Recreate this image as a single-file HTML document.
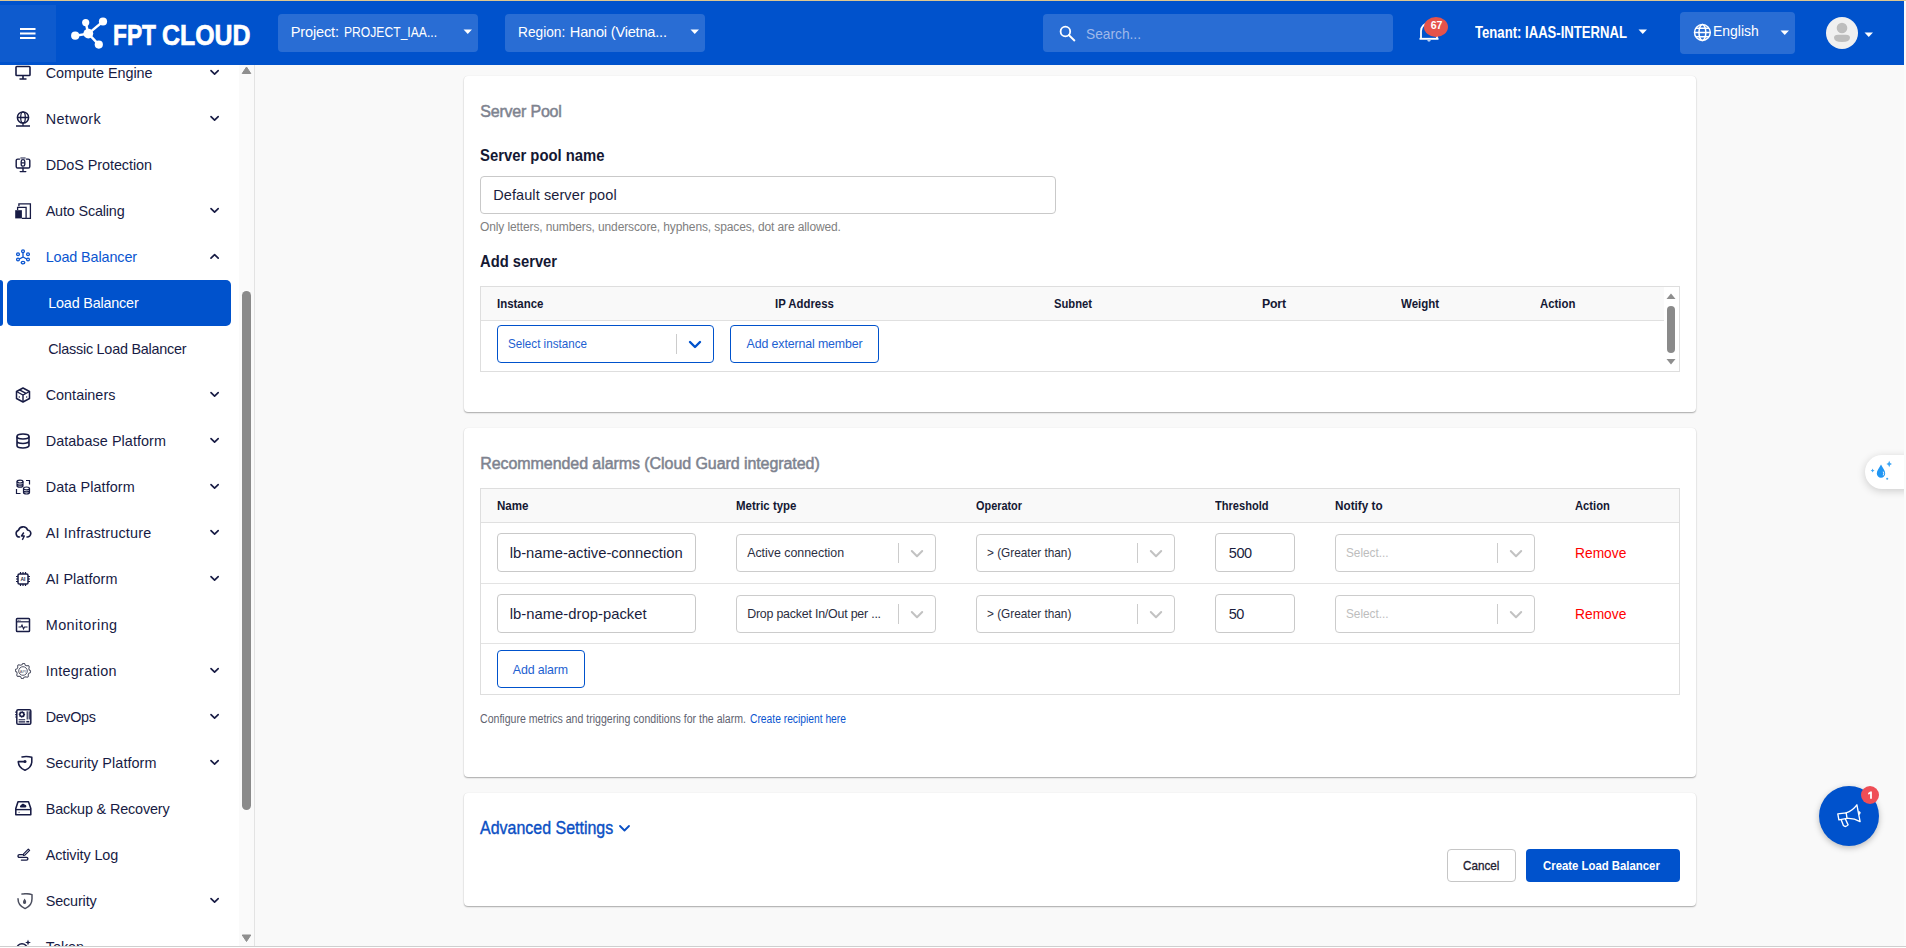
<!DOCTYPE html>
<html><head><meta charset="utf-8"><title>FPT Cloud - Create Load Balancer</title>
<style>
html,body{margin:0;padding:0;width:1906px;height:948px;overflow:hidden;background:#f9f9f9}
body{position:relative;font-family:"Liberation Sans",sans-serif}
.a{position:absolute;display:block}
.t{position:absolute;white-space:nowrap;line-height:1;font-family:"Liberation Sans",sans-serif}
</style></head><body>
<div class="a" style="left:0px;top:0px;width:1906px;height:948px;background:#f9f9f9"></div>
<div class="a" style="left:464px;top:76px;width:1232px;height:336px;background:#fff;border-radius:4px;box-shadow:0 1px 1.5px rgba(0,0,0,.32),0 0 1px rgba(0,0,0,.10)"></div>
<div class="a" style="left:464px;top:428px;width:1232px;height:349px;background:#fff;border-radius:4px;box-shadow:0 1px 1.5px rgba(0,0,0,.32),0 0 1px rgba(0,0,0,.10)"></div>
<div class="a" style="left:464px;top:793px;width:1232px;height:113px;background:#fff;border-radius:4px;box-shadow:0 1px 1.5px rgba(0,0,0,.32),0 0 1px rgba(0,0,0,.10)"></div>
<div class="t " style="left:480.25px;top:103.90px;font-size:16px;color:#7e838f;letter-spacing:-0.202px;-webkit-text-stroke:0.5px #7e838f;">Server Pool</div>
<div class="t " style="left:480.00px;top:148.00px;font-size:16px;color:#141833;font-weight:700;transform:scaleX(0.9274);transform-origin:0 0;">Server pool name</div>
<div class="a" style="left:480px;top:176px;width:576px;height:38px;border:1px solid #c9c9c9;border-radius:4px;box-sizing:border-box;background:#fff"></div>
<div class="t " style="left:493.20px;top:187.75px;font-size:14.5px;color:#1a1d3d;letter-spacing:0.097px;">Default server pool</div>
<div class="t " style="left:480.00px;top:220.70px;font-size:12px;color:#808080;letter-spacing:-0.118px;">Only letters, numbers, underscore, hyphens, spaces, dot are allowed.</div>
<div class="t " style="left:480.00px;top:253.50px;font-size:16px;color:#141833;font-weight:700;transform:scaleX(0.9219);transform-origin:0 0;">Add server</div>
<div class="a" style="left:480px;top:286px;width:1200px;height:86px;border:1px solid #dedede;box-sizing:border-box;background:#fff"></div>
<div class="a" style="left:481px;top:287px;width:1183px;height:33px;background:#f9f9f9"></div>
<div class="a" style="left:481px;top:320px;width:1183px;height:1px;background:#e0e0e0"></div>
<div class="t " style="left:496.60px;top:297.85px;font-size:12.3px;color:#141833;font-weight:700;transform:scaleX(0.9312);transform-origin:0 0;">Instance</div>
<div class="t " style="left:775.30px;top:297.85px;font-size:12.3px;color:#141833;font-weight:700;transform:scaleX(0.9247);transform-origin:0 0;">IP Address</div>
<div class="t " style="left:1053.60px;top:297.85px;font-size:12.3px;color:#141833;font-weight:700;transform:scaleX(0.9137);transform-origin:0 0;">Subnet</div>
<div class="t " style="left:1262.00px;top:297.85px;font-size:12.3px;color:#141833;font-weight:700;letter-spacing:-0.200px;">Port</div>
<div class="t " style="left:1401.10px;top:297.85px;font-size:12.3px;color:#141833;font-weight:700;transform:scaleX(0.9358);transform-origin:0 0;">Weight</div>
<div class="t " style="left:1540.30px;top:297.85px;font-size:12.3px;color:#141833;font-weight:700;transform:scaleX(0.9254);transform-origin:0 0;">Action</div>
<div class="a" style="left:497px;top:325px;width:217px;height:38px;border:1px solid #0052cc;border-radius:4px;box-sizing:border-box;background:#fff"></div>
<div class="t " style="left:507.70px;top:338.10px;font-size:12.4px;color:#1d5fd1;transform:scaleX(0.9397);transform-origin:0 0;">Select instance</div>
<div class="a" style="left:676px;top:334px;width:1px;height:20px;background:#cccccc"></div>
<svg class="a" style="left:687px;top:339px;" width="16" height="11" viewBox="0 0 16 11"><path d="M3 3 L8 8 L13 3" fill="none" stroke="#0052cc" stroke-width="2.4" stroke-linecap="round" stroke-linejoin="round"/></svg>
<div class="a" style="left:730px;top:325px;width:149px;height:38px;border:1px solid #0052cc;border-radius:4px;box-sizing:border-box;background:#fff"></div>
<div class="t " style="left:746.60px;top:337.70px;font-size:12.4px;color:#1d5fd1;letter-spacing:-0.130px;">Add external member</div>
<svg class="a" style="left:1665px;top:289px;" width="12" height="80" viewBox="0 0 12 80"><path d="M1.5 10 L6 4.5 L10.5 10 Z" fill="#8e8e8e"/><rect x="2" y="17" width="8" height="47" rx="4" fill="#8a8a8a"/><path d="M1.5 70 L6 75.5 L10.5 70 Z" fill="#8e8e8e"/></svg>
<div class="t " style="left:480.25px;top:456.30px;font-size:16px;color:#7e838f;letter-spacing:-0.069px;-webkit-text-stroke:0.5px #7e838f;">Recommended alarms (Cloud Guard integrated)</div>
<div class="a" style="left:480px;top:488px;width:1200px;height:207px;border:1px solid #dedede;box-sizing:border-box;background:#fff"></div>
<div class="a" style="left:481px;top:489px;width:1198px;height:33px;background:#f9f9f9"></div>
<div class="a" style="left:481px;top:522px;width:1198px;height:1px;background:#e0e0e0"></div>
<div class="a" style="left:481px;top:583px;width:1198px;height:1px;background:#e3e3e3"></div>
<div class="a" style="left:481px;top:643px;width:1198px;height:1px;background:#e3e3e3"></div>
<div class="t " style="left:496.80px;top:500.05px;font-size:12.3px;color:#141833;font-weight:700;transform:scaleX(0.9415);transform-origin:0 0;">Name</div>
<div class="t " style="left:736.30px;top:500.05px;font-size:12.3px;color:#141833;font-weight:700;transform:scaleX(0.9316);transform-origin:0 0;">Metric type</div>
<div class="t " style="left:976.30px;top:500.05px;font-size:12.3px;color:#141833;font-weight:700;transform:scaleX(0.8862);transform-origin:0 0;">Operator</div>
<div class="t " style="left:1215.40px;top:500.05px;font-size:12.3px;color:#141833;font-weight:700;transform:scaleX(0.9005);transform-origin:0 0;">Threshold</div>
<div class="t " style="left:1335.00px;top:500.05px;font-size:12.3px;color:#141833;font-weight:700;transform:scaleX(0.9535);transform-origin:0 0;">Notify to</div>
<div class="t " style="left:1575.00px;top:500.05px;font-size:12.3px;color:#141833;font-weight:700;transform:scaleX(0.9097);transform-origin:0 0;">Action</div>
<div class="a" style="left:497px;top:533px;width:199px;height:39px;border:1px solid #c9c9c9;border-radius:4px;box-sizing:border-box;background:#fff"></div>
<div class="a" style="left:736px;top:534px;width:200px;height:38px;border:1px solid #cccccc;border-radius:4px;box-sizing:border-box;background:#fff"></div>
<div class="a" style="left:898px;top:543px;width:1px;height:20px;background:#cccccc"></div>
<svg class="a" style="left:910px;top:549px;" width="14" height="10" viewBox="0 0 14 10"><path d="M1.8 2 L7 7.2 L12.2 2" fill="none" stroke="#c2c2c2" stroke-width="2" stroke-linecap="round" stroke-linejoin="round"/></svg>
<div class="a" style="left:976px;top:534px;width:199px;height:38px;border:1px solid #cccccc;border-radius:4px;box-sizing:border-box;background:#fff"></div>
<div class="a" style="left:1137px;top:543px;width:1px;height:20px;background:#cccccc"></div>
<svg class="a" style="left:1149px;top:549px;" width="14" height="10" viewBox="0 0 14 10"><path d="M1.8 2 L7 7.2 L12.2 2" fill="none" stroke="#c2c2c2" stroke-width="2" stroke-linecap="round" stroke-linejoin="round"/></svg>
<div class="a" style="left:1215px;top:533px;width:80px;height:39px;border:1px solid #c9c9c9;border-radius:4px;box-sizing:border-box;background:#fff"></div>
<div class="a" style="left:1335px;top:534px;width:200px;height:38px;border:1px solid #cccccc;border-radius:4px;box-sizing:border-box;background:#fff"></div>
<div class="a" style="left:1497px;top:543px;width:1px;height:20px;background:#cccccc"></div>
<svg class="a" style="left:1509px;top:549px;" width="14" height="10" viewBox="0 0 14 10"><path d="M1.8 2 L7 7.2 L12.2 2" fill="none" stroke="#c2c2c2" stroke-width="2" stroke-linecap="round" stroke-linejoin="round"/></svg>
<div class="a" style="left:497px;top:594px;width:199px;height:39px;border:1px solid #c9c9c9;border-radius:4px;box-sizing:border-box;background:#fff"></div>
<div class="a" style="left:736px;top:595px;width:200px;height:38px;border:1px solid #cccccc;border-radius:4px;box-sizing:border-box;background:#fff"></div>
<div class="a" style="left:898px;top:604px;width:1px;height:20px;background:#cccccc"></div>
<svg class="a" style="left:910px;top:610px;" width="14" height="10" viewBox="0 0 14 10"><path d="M1.8 2 L7 7.2 L12.2 2" fill="none" stroke="#c2c2c2" stroke-width="2" stroke-linecap="round" stroke-linejoin="round"/></svg>
<div class="a" style="left:976px;top:595px;width:199px;height:38px;border:1px solid #cccccc;border-radius:4px;box-sizing:border-box;background:#fff"></div>
<div class="a" style="left:1137px;top:604px;width:1px;height:20px;background:#cccccc"></div>
<svg class="a" style="left:1149px;top:610px;" width="14" height="10" viewBox="0 0 14 10"><path d="M1.8 2 L7 7.2 L12.2 2" fill="none" stroke="#c2c2c2" stroke-width="2" stroke-linecap="round" stroke-linejoin="round"/></svg>
<div class="a" style="left:1215px;top:594px;width:80px;height:39px;border:1px solid #c9c9c9;border-radius:4px;box-sizing:border-box;background:#fff"></div>
<div class="a" style="left:1335px;top:595px;width:200px;height:38px;border:1px solid #cccccc;border-radius:4px;box-sizing:border-box;background:#fff"></div>
<div class="a" style="left:1497px;top:604px;width:1px;height:20px;background:#cccccc"></div>
<svg class="a" style="left:1509px;top:610px;" width="14" height="10" viewBox="0 0 14 10"><path d="M1.8 2 L7 7.2 L12.2 2" fill="none" stroke="#c2c2c2" stroke-width="2" stroke-linecap="round" stroke-linejoin="round"/></svg>
<div class="t " style="left:509.70px;top:545.60px;font-size:14.8px;color:#1a1d3d;letter-spacing:-0.025px;">lb-name-active-connection</div>
<div class="t " style="left:509.70px;top:606.60px;font-size:14.8px;color:#1a1d3d;letter-spacing:0.022px;">lb-name-drop-packet</div>
<div class="t " style="left:747.20px;top:546.90px;font-size:12.4px;color:#2b2e3f;letter-spacing:-0.014px;">Active connection</div>
<div class="t " style="left:747.20px;top:607.60px;font-size:12.4px;color:#2b2e3f;letter-spacing:-0.210px;">Drop packet In/Out per ...</div>
<div class="t " style="left:987.10px;top:546.60px;font-size:12.4px;color:#2b2e3f;transform:scaleX(0.9533);transform-origin:0 0;">&gt; (Greater than)</div>
<div class="t " style="left:987.10px;top:607.60px;font-size:12.4px;color:#2b2e3f;transform:scaleX(0.9533);transform-origin:0 0;">&gt; (Greater than)</div>
<div class="t " style="left:1228.70px;top:546.05px;font-size:14.5px;color:#1a1d3d;letter-spacing:-0.357px;">500</div>
<div class="t " style="left:1228.70px;top:606.75px;font-size:14.5px;color:#1a1d3d;letter-spacing:-0.595px;">50</div>
<div class="t " style="left:1346.40px;top:546.90px;font-size:12.4px;color:#bdbdbd;transform:scaleX(0.9517);transform-origin:0 0;">Select...</div>
<div class="t " style="left:1346.40px;top:607.80px;font-size:12.4px;color:#bdbdbd;transform:scaleX(0.9517);transform-origin:0 0;">Select...</div>
<div class="t " style="left:1575.40px;top:545.75px;font-size:14.5px;color:#ff0000;transform:scaleX(0.9511);transform-origin:0 0;">Remove</div>
<div class="t " style="left:1575.40px;top:606.75px;font-size:14.5px;color:#ff0000;transform:scaleX(0.9511);transform-origin:0 0;">Remove</div>
<div class="a" style="left:497px;top:650px;width:88px;height:38px;border:1px solid #0052cc;border-radius:4px;box-sizing:border-box;background:#fff"></div>
<div class="t " style="left:512.80px;top:664.10px;font-size:12.4px;color:#1d5fd1;letter-spacing:-0.143px;">Add alarm</div>
<div class="t " style="left:479.90px;top:713.20px;font-size:12px;color:#5f6370;transform:scaleX(0.8803);transform-origin:0 0;">Configure metrics and triggering conditions for the alarm.</div>
<div class="t " style="left:749.70px;top:713.20px;font-size:12px;color:#0a55cf;transform:scaleX(0.8565);transform-origin:0 0;">Create recipient here</div>
<div class="t " style="left:479.90px;top:819.25px;font-size:18.5px;color:#0a4fc4;transform:scaleX(0.8637);transform-origin:0 0;-webkit-text-stroke:0.4px #0a4fc4;">Advanced Settings</div>
<svg class="a" style="left:618px;top:823px;" width="13" height="11" viewBox="0 0 13 11"><path d="M2 3 L6.5 7.5 L11 3" fill="none" stroke="#0a4fc4" stroke-width="1.8" stroke-linecap="round" stroke-linejoin="round"/></svg>
<div class="a" style="left:1447px;top:849px;width:69px;height:33px;border:1px solid #c6c6c6;border-radius:4px;box-sizing:border-box;background:#fff"></div>
<div class="t " style="left:1463.05px;top:859.20px;font-size:13px;color:#1e2030;transform:scaleX(0.8986);transform-origin:0 0;-webkit-text-stroke:0.3px #1e2030;">Cancel</div>
<div class="a" style="left:1526px;top:849px;width:154px;height:33px;background:#0052cc;border-radius:4px"></div>
<div class="t " style="left:1542.60px;top:859.95px;font-size:12.5px;color:#ffffff;font-weight:700;transform:scaleX(0.9089);transform-origin:0 0;">Create Load Balancer</div>
<div class="a" style="left:0px;top:65px;width:239px;height:881px;background:#fff"></div>
<div class="a" style="left:239px;top:65px;width:15px;height:881px;background:#fafafa"></div>
<div class="a" style="left:254px;top:65px;width:1px;height:881px;background:#e3e3e3"></div>
<svg class="a" style="left:239px;top:64px;" width="15" height="12" viewBox="0 0 15 12"><path d="M3.2 9.5 L7.5 3 L11.8 9.5 Z" fill="#8f8f8f" stroke="#8f8f8f" stroke-width="1" stroke-linejoin="round"/></svg>
<div class="a" style="left:242px;top:291px;width:9px;height:519px;background:#8a8a8a;border-radius:5px"></div>
<svg class="a" style="left:239px;top:932px;" width="15" height="12" viewBox="0 0 15 12"><path d="M3.2 3 L7.5 9.5 L11.8 3 Z" fill="#8f8f8f" stroke="#8f8f8f" stroke-width="1" stroke-linejoin="round"/></svg>
<svg class="a" style="left:15px;top:65px;" width="18" height="17" viewBox="0 0 18 17"><rect x="1" y="1.5" width="14" height="9" rx="0.8" fill="none" stroke="#171b44" stroke-width="1.6"/><path d="M8 10.5 V13.5 M4.5 14 H11.5" stroke="#171b44" stroke-width="1.6" fill="none"/></svg>
<div class="t " style="left:45.70px;top:65.80px;font-size:14.4px;color:#171b44;letter-spacing:-0.022px;">Compute Engine</div>
<svg class="a" style="left:209px;top:69px;" width="11" height="8" viewBox="0 0 11 8"><path d="M2 1.6 L5.6 5.2 L9.2 1.6" fill="none" stroke="#171b44" stroke-width="1.65" stroke-linecap="round" stroke-linejoin="round"/></svg>
<svg class="a" style="left:15px;top:111px;" width="18" height="17" viewBox="0 0 18 17"><circle cx="8" cy="6.5" r="5.6" fill="none" stroke="#171b44" stroke-width="1.5"/><ellipse cx="8" cy="6.5" rx="2.3" ry="5.6" fill="none" stroke="#171b44" stroke-width="1.3"/><path d="M2.4 6.5 H13.6 M8 12 V14.5 M1 15 H15" stroke="#171b44" stroke-width="1.3" fill="none"/></svg>
<div class="t " style="left:45.70px;top:111.80px;font-size:14.4px;color:#171b44;letter-spacing:0.368px;">Network</div>
<svg class="a" style="left:209px;top:115px;" width="11" height="8" viewBox="0 0 11 8"><path d="M2 1.6 L5.6 5.2 L9.2 1.6" fill="none" stroke="#171b44" stroke-width="1.65" stroke-linecap="round" stroke-linejoin="round"/></svg>
<svg class="a" style="left:15px;top:157px;" width="18" height="17" viewBox="0 0 18 17"><path d="M4.6 2.1 H2.7 Q1.2 2.1 1.2 3.6 V9.4 Q1.2 11 2.7 11 H13.3 Q14.8 11 14.8 9.4 V3.6 Q14.8 2.1 13.3 2.1 H11.4" fill="none" stroke="#171b44" stroke-width="1.45" stroke-linecap="round"/><path d="M8 11 V14.3 M5.2 14.6 H10.8" stroke="#171b44" stroke-width="1.4" stroke-linecap="round"/><rect x="6.2" y="2.6" width="3.6" height="6.6" rx="1.8" fill="none" stroke="#171b44" stroke-width="1.3"/><path d="M6.3 5.9 H9.7 M5.4 1 H10.6" stroke="#171b44" stroke-width="1.2"/></svg>
<div class="t " style="left:45.70px;top:157.80px;font-size:14.4px;color:#171b44;letter-spacing:-0.063px;">DDoS Protection</div>
<svg class="a" style="left:15px;top:203px;" width="18" height="17" viewBox="0 0 18 17"><path d="M3.9 3.2 V0.8 H15.4 V15.4 H11.2" fill="none" stroke="#171b44" stroke-width="1.3"/><path d="M2.6 7 V4.3 H11.1 V15.4 H6.9" fill="none" stroke="#171b44" stroke-width="1.3"/><rect x="0.2" y="7.2" width="6.7" height="8.2" fill="#171b44"/></svg>
<div class="t " style="left:45.70px;top:203.80px;font-size:14.4px;color:#171b44;letter-spacing:-0.162px;">Auto Scaling</div>
<svg class="a" style="left:209px;top:207px;" width="11" height="8" viewBox="0 0 11 8"><path d="M2 1.6 L5.6 5.2 L9.2 1.6" fill="none" stroke="#171b44" stroke-width="1.65" stroke-linecap="round" stroke-linejoin="round"/></svg>
<svg class="a" style="left:15px;top:249px;" width="18" height="17" viewBox="0 0 18 17"><circle cx="8" cy="2.2" r="1.4" fill="none" stroke="#0a55d0" stroke-width="1.3"/><circle cx="3" cy="5.2" r="1.4" fill="none" stroke="#0a55d0" stroke-width="1.3"/><circle cx="13" cy="5.2" r="1.4" fill="none" stroke="#0a55d0" stroke-width="1.3"/><circle cx="3" cy="10.5" r="1.4" fill="none" stroke="#0a55d0" stroke-width="1.3"/><circle cx="13" cy="10.5" r="1.4" fill="none" stroke="#0a55d0" stroke-width="1.3"/><ellipse cx="8" cy="13.6" rx="1.8" ry="1.3" fill="none" stroke="#0a55d0" stroke-width="1.3"/><path d="M8 3.6 V8 L4.3 10 M8 8 L11.7 10" fill="none" stroke="#0a55d0" stroke-width="1.3"/></svg>
<div class="t " style="left:45.70px;top:249.80px;font-size:14.4px;color:#0a55d0;letter-spacing:-0.115px;">Load Balancer</div>
<svg class="a" style="left:209px;top:252px;" width="11" height="8" viewBox="0 0 11 8"><path d="M2 6.2 L5.6 2.6 L9.2 6.2" fill="none" stroke="#171b44" stroke-width="1.65" stroke-linecap="round" stroke-linejoin="round"/></svg>
<div class="a" style="left:0px;top:280px;width:3px;height:46px;background:#0052cc;border-radius:0 4px 4px 0"></div>
<div class="a" style="left:7px;top:280px;width:224px;height:46px;background:#0052cc;border-radius:5px"></div>
<div class="t " style="left:48.20px;top:295.80px;font-size:14.4px;color:#ffffff;letter-spacing:-0.190px;">Load Balancer</div>
<div class="t " style="left:48.20px;top:341.80px;font-size:14.4px;color:#171b44;letter-spacing:-0.244px;">Classic Load Balancer</div>
<svg class="a" style="left:15px;top:387px;" width="18" height="17" viewBox="0 0 18 17"><path d="M8 1 L14.5 4.5 V11.5 L8 15 L1.5 11.5 V4.5 Z" fill="none" stroke="#171b44" stroke-width="1.5" stroke-linejoin="round"/><path d="M1.5 4.5 L8 8 L14.5 4.5 M8 8 V15 M4.5 2.8 L11 6.3" fill="none" stroke="#171b44" stroke-width="1.4"/><circle cx="4.3" cy="10" r="0.7" fill="#171b44"/><circle cx="11.7" cy="10" r="0.7" fill="#171b44"/></svg>
<div class="t " style="left:45.70px;top:387.80px;font-size:14.4px;color:#171b44;letter-spacing:0.012px;">Containers</div>
<svg class="a" style="left:209px;top:391px;" width="11" height="8" viewBox="0 0 11 8"><path d="M2 1.6 L5.6 5.2 L9.2 1.6" fill="none" stroke="#171b44" stroke-width="1.65" stroke-linecap="round" stroke-linejoin="round"/></svg>
<svg class="a" style="left:15px;top:433px;" width="18" height="17" viewBox="0 0 18 17"><ellipse cx="8" cy="3.5" rx="6" ry="2.5" fill="none" stroke="#171b44" stroke-width="1.6"/><path d="M2 3.5 V12.5 A6 2.5 0 0 0 14 12.5 V3.5 M2 8 A6 2.5 0 0 0 14 8" fill="none" stroke="#171b44" stroke-width="1.6"/></svg>
<div class="t " style="left:45.70px;top:433.80px;font-size:14.4px;color:#171b44;letter-spacing:0.067px;">Database Platform</div>
<svg class="a" style="left:209px;top:437px;" width="11" height="8" viewBox="0 0 11 8"><path d="M2 1.6 L5.6 5.2 L9.2 1.6" fill="none" stroke="#171b44" stroke-width="1.65" stroke-linecap="round" stroke-linejoin="round"/></svg>
<svg class="a" style="left:15px;top:479px;" width="18" height="17" viewBox="0 0 18 17"><ellipse cx="5" cy="2.6" rx="3" ry="1.4" fill="none" stroke="#171b44" stroke-width="1.2"/><path d="M2 2.6 V6.8 A3 1.4 0 0 0 8 6.8 V2.6 M2 4.7 A3 1.4 0 0 0 8 4.7" fill="none" stroke="#171b44" stroke-width="1.2"/><ellipse cx="11.5" cy="9.4" rx="3" ry="1.4" fill="none" stroke="#171b44" stroke-width="1.2"/><path d="M8.5 9.4 V13.6 A3 1.4 0 0 0 14.5 13.6 V9.4 M8.5 11.5 A3 1.4 0 0 0 14.5 11.5" fill="none" stroke="#171b44" stroke-width="1.2"/><path d="M11 1.5 H14.5 V5.5 M1.5 10 V14.5 H5.5" fill="none" stroke="#171b44" stroke-width="1.2"/></svg>
<div class="t " style="left:45.70px;top:479.80px;font-size:14.4px;color:#171b44;letter-spacing:0.085px;">Data Platform</div>
<svg class="a" style="left:209px;top:483px;" width="11" height="8" viewBox="0 0 11 8"><path d="M2 1.6 L5.6 5.2 L9.2 1.6" fill="none" stroke="#171b44" stroke-width="1.65" stroke-linecap="round" stroke-linejoin="round"/></svg>
<svg class="a" style="left:15px;top:525px;" width="18" height="17" viewBox="0 0 18 17"><path d="M4.5 12 A3.5 3.5 0 0 1 3.5 5.2 A4.8 4.8 0 0 1 12.6 5 A3.5 3.5 0 0 1 12 12" fill="none" stroke="#171b44" stroke-width="1.6" stroke-linecap="round"/><path d="M8.8 7.5 L6.5 11 H9.3 L7.3 14.8" fill="none" stroke="#171b44" stroke-width="1.4" stroke-linejoin="round"/></svg>
<div class="t " style="left:45.70px;top:525.80px;font-size:14.4px;color:#171b44;letter-spacing:0.195px;">AI Infrastructure</div>
<svg class="a" style="left:209px;top:529px;" width="11" height="8" viewBox="0 0 11 8"><path d="M2 1.6 L5.6 5.2 L9.2 1.6" fill="none" stroke="#171b44" stroke-width="1.65" stroke-linecap="round" stroke-linejoin="round"/></svg>
<svg class="a" style="left:15px;top:571px;" width="18" height="17" viewBox="0 0 18 17"><rect x="3" y="3" width="10" height="10" rx="1.3" fill="none" stroke="#171b44" stroke-width="1.5"/><path d="M5.5 1 V3 M8 1 V3 M10.5 1 V3 M5.5 13 V15 M8 13 V15 M10.5 13 V15 M1 5.5 H3 M1 8 H3 M1 10.5 H3 M13 5.5 H15 M13 8 H15 M13 10.5 H15" stroke="#171b44" stroke-width="1.2"/><text x="8" y="10" font-size="5" font-family="Liberation Sans" font-weight="700" text-anchor="middle" fill="#171b44">AI</text></svg>
<div class="t " style="left:45.70px;top:571.80px;font-size:14.4px;color:#171b44;letter-spacing:0.052px;">AI Platform</div>
<svg class="a" style="left:209px;top:575px;" width="11" height="8" viewBox="0 0 11 8"><path d="M2 1.6 L5.6 5.2 L9.2 1.6" fill="none" stroke="#171b44" stroke-width="1.65" stroke-linecap="round" stroke-linejoin="round"/></svg>
<svg class="a" style="left:15px;top:617px;" width="18" height="17" viewBox="0 0 18 17"><rect x="1.5" y="1.5" width="13" height="13" rx="0.8" fill="none" stroke="#171b44" stroke-width="1.5"/><path d="M1.5 4.8 H14.5" stroke="#171b44" stroke-width="1.2"/><path d="M3.5 10 H6 L7 8 L8.5 12 L9.5 10 H12.5" fill="none" stroke="#171b44" stroke-width="1.1"/><circle cx="3.3" cy="3.2" r="0.5" fill="#171b44"/><circle cx="5" cy="3.2" r="0.5" fill="#171b44"/></svg>
<div class="t " style="left:45.70px;top:617.80px;font-size:14.4px;color:#171b44;letter-spacing:0.472px;">Monitoring</div>
<svg class="a" style="left:15px;top:663px;" width="18" height="17" viewBox="0 0 18 17"><path d="M8.00 0.40 L9.48 0.55 L10.41 2.18 L11.50 2.76 L13.37 2.63 L14.32 3.78 L13.82 5.59 L14.18 6.77 L15.60 8.00 L15.45 9.48 L13.82 10.41 L13.24 11.50 L13.37 13.37 L12.22 14.32 L10.41 13.82 L9.23 14.18 L8.00 15.60 L6.52 15.45 L5.59 13.82 L4.50 13.24 L2.63 13.37 L1.68 12.22 L2.18 10.41 L1.82 9.23 L0.40 8.00 L0.55 6.52 L2.18 5.59 L2.76 4.50 L2.63 2.63 L3.78 1.68 L5.59 2.18 L6.77 1.82 Z" fill="none" stroke="#55586a" stroke-width="1.05" stroke-linejoin="round"/><circle cx="8" cy="8" r="4.3" fill="none" stroke="#55586a" stroke-width="1"/><text x="8" y="9.5" font-size="4" font-family="Liberation Sans" text-anchor="middle" fill="#55586a">API</text></svg>
<div class="t " style="left:45.70px;top:663.80px;font-size:14.4px;color:#171b44;letter-spacing:0.279px;">Integration</div>
<svg class="a" style="left:209px;top:667px;" width="11" height="8" viewBox="0 0 11 8"><path d="M2 1.6 L5.6 5.2 L9.2 1.6" fill="none" stroke="#171b44" stroke-width="1.65" stroke-linecap="round" stroke-linejoin="round"/></svg>
<svg class="a" style="left:15px;top:709px;" width="18" height="17" viewBox="0 0 18 17"><rect x="1.8" y="0.8" width="14" height="14.5" rx="1.3" fill="none" stroke="#171b44" stroke-width="1.5"/><path d="M0.2 3.2 H1.8 M0.2 5.6 H1.8 M0.2 8 H1.8" stroke="#171b44" stroke-width="1.2"/><path d="M6.90 2.80 L7.41 2.85 L7.59 3.74 L7.90 3.90 L8.74 3.56 L9.06 3.96 L8.56 4.71 L8.67 5.05 L9.50 5.40 L9.45 5.91 L8.56 6.09 L8.40 6.40 L8.74 7.24 L8.34 7.56 L7.59 7.06 L7.25 7.17 L6.90 8.00 L6.39 7.95 L6.21 7.06 L5.90 6.90 L5.06 7.24 L4.74 6.84 L5.24 6.09 L5.13 5.75 L4.30 5.40 L4.35 4.89 L5.24 4.71 L5.40 4.40 L5.06 3.56 L5.46 3.24 L6.21 3.74 L6.55 3.63 Z" fill="none" stroke="#171b44" stroke-width="1.2"/><path d="M12.2 2.3 V10.5 M14.2 2.3 V10.5 M3.6 10.8 H10.2 M3.6 12.9 H10.2" stroke="#171b44" stroke-width="1.1"/><rect x="11.3" y="11.9" width="3" height="1.6" fill="#171b44"/></svg>
<div class="t " style="left:45.70px;top:709.80px;font-size:14.4px;color:#171b44;letter-spacing:-0.357px;">DevOps</div>
<svg class="a" style="left:209px;top:713px;" width="11" height="8" viewBox="0 0 11 8"><path d="M2 1.6 L5.6 5.2 L9.2 1.6" fill="none" stroke="#171b44" stroke-width="1.65" stroke-linecap="round" stroke-linejoin="round"/></svg>
<svg class="a" style="left:15px;top:755px;" width="18" height="17" viewBox="0 0 18 17"><path d="M7 1.9 Q12 0.9 16.8 2.3 V6.2 Q16.8 12.6 10 15.3 Q3.3 12.6 3.3 6.6 H10" fill="none" stroke="#171b44" stroke-width="1.55" stroke-linejoin="round" stroke-linecap="round"/><circle cx="10" cy="6.6" r="1.5" fill="#171b44"/></svg>
<div class="t " style="left:45.70px;top:755.80px;font-size:14.4px;color:#171b44;letter-spacing:0.076px;">Security Platform</div>
<svg class="a" style="left:209px;top:759px;" width="11" height="8" viewBox="0 0 11 8"><path d="M2 1.6 L5.6 5.2 L9.2 1.6" fill="none" stroke="#171b44" stroke-width="1.65" stroke-linecap="round" stroke-linejoin="round"/></svg>
<svg class="a" style="left:15px;top:801px;" width="18" height="17" viewBox="0 0 18 17"><path d="M3 0.8 H13.5 L15.8 7.5 V13.8 H0.8 V7.5 Z" fill="none" stroke="#171b44" stroke-width="1.55" stroke-linejoin="round"/><path d="M0.8 8.6 H15.8" stroke="#171b44" stroke-width="1.4"/><path d="M5.6 6.6 A1.5 1.5 0 0 1 6.2 3.9 A2 2 0 0 1 9.8 3.7 A1.5 1.5 0 0 1 10.4 6.6 Z" fill="#171b44"/><circle cx="4.1" cy="11.3" r="0.55" fill="#171b44"/></svg>
<div class="t " style="left:45.70px;top:801.80px;font-size:14.4px;color:#171b44;letter-spacing:-0.152px;">Backup &amp; Recovery</div>
<svg class="a" style="left:15px;top:847px;" width="18" height="17" viewBox="0 0 18 17"><path d="M8.6 6.8 L13.3 2.1 L14.6 3.4 L9.9 8.1 L8.3 8.4 Z" fill="none" stroke="#171b44" stroke-width="1.2" stroke-linejoin="round"/><path d="M7.5 7.6 H4.4 C2.5 7.6 2.5 10.4 4.4 10.4 H11.4 C13.4 10.4 13.4 13.1 11.4 13.1 H6.4" fill="none" stroke="#171b44" stroke-width="1.35" stroke-linecap="round"/></svg>
<div class="t " style="left:45.70px;top:847.80px;font-size:14.4px;color:#171b44;letter-spacing:-0.089px;">Activity Log</div>
<svg class="a" style="left:15px;top:893px;" width="18" height="17" viewBox="0 0 18 17"><path d="M7 1.1 Q12 0.1 17 1.6 V5.8 Q17 12.8 10.1 15.6 Q3 12.8 3 5.8" fill="none" stroke="#4d5060" stroke-width="1.5" stroke-linejoin="round" stroke-linecap="round"/><path d="M9.6 5.6 Q11.6 8.2 11.1 9.7 A1.6 1.6 0 0 1 8 9.7 Q7.7 8.2 9.6 5.6 Z" fill="#4d5060"/></svg>
<div class="t " style="left:45.70px;top:893.80px;font-size:14.4px;color:#171b44;letter-spacing:-0.141px;">Security</div>
<svg class="a" style="left:209px;top:897px;" width="11" height="8" viewBox="0 0 11 8"><path d="M2 1.6 L5.6 5.2 L9.2 1.6" fill="none" stroke="#171b44" stroke-width="1.65" stroke-linecap="round" stroke-linejoin="round"/></svg>
<svg class="a" style="left:15px;top:939px;" width="18" height="17" viewBox="0 0 18 17"><circle cx="7" cy="10" r="5.3" fill="none" stroke="#171b44" stroke-width="1.5"/><path d="M3.5 9.5 H10.5" stroke="#171b44" stroke-width="1.3"/><path d="M13 0.5 L13.8 2.7 L16 3.5 L13.8 4.3 L13 6.5 L12.2 4.3 L10 3.5 L12.2 2.7 Z" fill="#171b44"/></svg>
<div class="t " style="left:45.70px;top:939.80px;font-size:14.4px;color:#171b44;">Token</div>
<div class="a" style="left:0px;top:946px;width:1906px;height:1px;background:#cfcfcf"></div>
<div class="a" style="left:0px;top:947px;width:1906px;height:1px;background:#ffffff"></div>
<div class="a" style="left:1865px;top:455px;width:60px;height:34px;background:#fff;border-radius:17px;box-shadow:0 2px 8px rgba(0,0,0,.18)"></div>
<svg class="a" style="left:1868px;top:459px;" width="28" height="26" viewBox="0 0 28 26"><path d="M13 5.6 C11.2 9.4 8.8 11.6 8.8 14.6 A4.2 4.2 0 0 0 17.2 14.6 C17.2 11.6 14.8 9.4 13 5.6 Z" fill="#2196f3"/><path d="M15.4 13 Q16.1 14.6 15.4 16" stroke="#fff" stroke-width="0.9" fill="none" stroke-linecap="round"/><path d="M21.2 1.8 Q21.6 4.6 24 5 Q21.6 5.4 21.2 8.2 Q20.8 5.4 18.4 5 Q20.8 4.6 21.2 1.8 Z" fill="#3ea6f5"/><path d="M4.6 9.4 Q4.9 11.2 6.6 11.5 Q4.9 11.8 4.6 13.6 Q4.3 11.8 2.6 11.5 Q4.3 11.2 4.6 9.4 Z" fill="#3ea6f5"/><circle cx="19.2" cy="19.8" r="1.05" fill="#3ea6f5"/></svg>
<div class="a" style="left:1904px;top:65px;width:2px;height:881px;background:#fbfbfb"></div>
<div class="a" style="left:1819px;top:786px;width:60px;height:60px;background:#0052cc;border-radius:50%;box-shadow:0 2px 6px rgba(0,0,0,.25)"></div>
<svg class="a" style="left:1830px;top:800px;" width="36" height="32" viewBox="0 0 36 32"><g fill="none" stroke="#fff" stroke-width="1.35" stroke-linejoin="round" stroke-linecap="round"><path d="M7.8 13.8 L16.2 12.9 L17 18.4 L8.9 19.9 Z"/><path d="M16.2 12.9 Q22.5 10.8 26.9 4.8 L30.1 21.6 Q23.5 17.8 17 18.4"/><path d="M29 11.8 L30 12.6 L29.5 14"/><path d="M11.2 19.8 L13.4 25.6 Q15.6 27.6 18.1 24.9 L15.5 19.2"/></g></svg>
<div class="a" style="left:1861px;top:786px;width:18px;height:18px;background:#ef4e56;border-radius:50%"></div>
<svg class="a" style="left:1864px;top:789px;" width="12" height="12" viewBox="0 0 12 12"><path d="M6.2 2.6 L7.9 2.6 L7.9 9.8 L6.1 9.8 L6.1 4.9 L4.1 5.6 L4.1 4.1 Z" fill="#fff"/></svg>
<div class="a" style="left:0px;top:0px;width:1904px;height:65px;background:#0052cc"></div>
<div class="a" style="left:0px;top:0px;width:1906px;height:1px;background:#dfc78f"></div>
<div class="a" style="left:1904px;top:1px;width:2px;height:64px;background:#fafafa"></div>
<div class="a" style="left:0px;top:5px;width:56px;height:57px;background:rgba(255,255,255,.055)"></div>
<svg class="a" style="left:18px;top:24px;" width="20" height="18" viewBox="0 0 20 18"><path d="M2 5 H17.5 M2 9.5 H17.5 M2 14 H17.5" stroke="#fff" stroke-width="1.8"/></svg>
<svg class="a" style="left:68px;top:14px;" width="40" height="38" viewBox="0 0 40 38"><g stroke="#fff" stroke-width="2.4" fill="#fff"><line x1="20.3" y1="19.6" x2="17.7" y2="8.6"/><line x1="20.3" y1="19.6" x2="35" y2="7.5"/><line x1="20.3" y1="19.6" x2="7.2" y2="21.7"/><line x1="20.3" y1="19.6" x2="30.8" y2="30.6"/></g><g fill="#fff"><circle cx="20.3" cy="19.6" r="4.9"/><circle cx="17.7" cy="8.6" r="3.6"/><circle cx="35" cy="7.5" r="4.1"/><circle cx="7.2" cy="21.7" r="4.1"/><circle cx="30.8" cy="30.6" r="4.1"/></g></svg>
<div class="t " style="left:112.85px;top:20.05px;font-size:29.5px;color:#fff;font-weight:700;transform:scaleX(0.7705);transform-origin:0 0;-webkit-text-stroke:0.7px #fff;">FPT</div>
<div class="t " style="left:161.65px;top:20.05px;font-size:29.5px;color:#fff;font-weight:700;transform:scaleX(0.8437);transform-origin:0 0;-webkit-text-stroke:0.7px #fff;">CLOUD</div>
<div class="a" style="left:278px;top:14px;width:200px;height:38px;background:rgba(255,255,255,.16);border-radius:4px"></div>
<div class="t " style="left:290.70px;top:24.50px;font-size:14.6px;color:#fff;letter-spacing:-0.156px;">Project:</div>
<div class="t " style="left:343.90px;top:24.50px;font-size:14.6px;color:#fff;transform:scaleX(0.8314);transform-origin:0 0;">PROJECT_IAA...</div>
<svg class="a" style="left:463px;top:29px;" width="10" height="6" viewBox="0 0 10 6"><path d="M0.5 0.5 H9 L4.75 5 Z" fill="#fff"/></svg>
<div class="a" style="left:505px;top:14px;width:200px;height:38px;background:rgba(255,255,255,.16);border-radius:4px"></div>
<div class="t " style="left:517.60px;top:24.50px;font-size:14.6px;color:#fff;transform:scaleX(0.9391);transform-origin:0 0;">Region:</div>
<div class="t " style="left:569.80px;top:24.50px;font-size:14.6px;color:#fff;letter-spacing:-0.207px;">Hanoi (Vietna...</div>
<svg class="a" style="left:690px;top:29px;" width="10" height="6" viewBox="0 0 10 6"><path d="M0.5 0.5 H9 L4.75 5 Z" fill="#fff"/></svg>
<div class="a" style="left:1043px;top:14px;width:350px;height:38px;background:rgba(255,255,255,.16);border-radius:4px"></div>
<svg class="a" style="left:1057px;top:23px;" width="20" height="20" viewBox="0 0 20 20"><circle cx="8.4" cy="8.5" r="4.8" fill="none" stroke="#fff" stroke-width="1.8"/><path d="M12 12.2 L17.2 17.3" stroke="#fff" stroke-width="1.9" stroke-linecap="square"/></svg>
<div class="t " style="left:1086.00px;top:26.50px;font-size:14.6px;color:#9fb9ea;transform:scaleX(0.9418);transform-origin:0 0;">Search...</div>
<svg class="a" style="left:1418px;top:18px;" width="24" height="26" viewBox="0 0 24 26"><path d="M3 20.5 V13 A8 8 0 0 1 19 13 V20.5" fill="none" stroke="#fff" stroke-width="1.8"/><path d="M1.5 20.8 H20.5" stroke="#fff" stroke-width="1.9"/><path d="M9.2 22.3 A1.9 1.9 0 0 0 12.8 22.3 Z" fill="#fff"/></svg>
<div class="a" style="left:1424px;top:17px;width:24px;height:20px;background:#e5534b;border-radius:50%"></div>
<div class="t " style="left:1430.80px;top:19.70px;font-size:10.6px;color:#fff;font-weight:700;letter-spacing:-0.166px;">67</div>
<div class="t " style="left:1475.00px;top:24.25px;font-size:16.5px;color:#fff;font-weight:700;transform:scaleX(0.7948);transform-origin:0 0;">Tenant: IAAS-INTERNAL</div>
<svg class="a" style="left:1637.5px;top:29px;" width="10" height="6" viewBox="0 0 10 6"><path d="M0.5 0.5 H9 L4.75 5 Z" fill="#fff"/></svg>
<div class="a" style="left:1680px;top:12px;width:115px;height:42px;background:rgba(255,255,255,.16);border-radius:4px"></div>
<svg class="a" style="left:1693px;top:23px;" width="19" height="19" viewBox="0 0 19 19"><g fill="none" stroke="#fff" stroke-width="1.5"><circle cx="9.4" cy="9.5" r="7.9"/><ellipse cx="9.4" cy="9.5" rx="3.4" ry="7.9"/><path d="M1.5 9.5 H17.3 M2.8 5.3 H16 M2.8 13.7 H16"/></g></svg>
<div class="t " style="left:1713.30px;top:23.80px;font-size:14.8px;color:#fff;transform:scaleX(0.9414);transform-origin:0 0;">English</div>
<svg class="a" style="left:1779.5px;top:29.5px;" width="10" height="6" viewBox="0 0 10 6"><path d="M0.5 0.5 H9 L4.75 5 Z" fill="#fff"/></svg>
<div class="a" style="left:1826px;top:17px;width:32px;height:32px;border-radius:50%;background:#f0f0f0"></div>
<svg class="a" style="left:1826px;top:17px;" width="32" height="32" viewBox="0 0 32 32"><circle cx="16" cy="11" r="5.3" fill="#bdbdbd"/><path d="M8 20.8 Q8 17.7 12 17.7 H20 Q24 17.7 24 20.8 Q24 25 16 25 Q8 25 8 20.8 Z" fill="#bdbdbd"/></svg>
<svg class="a" style="left:1864px;top:31.5px;" width="10" height="6" viewBox="0 0 10 6"><path d="M0.5 0.5 H9 L4.75 5 Z" fill="#fff"/></svg>
</body></html>
